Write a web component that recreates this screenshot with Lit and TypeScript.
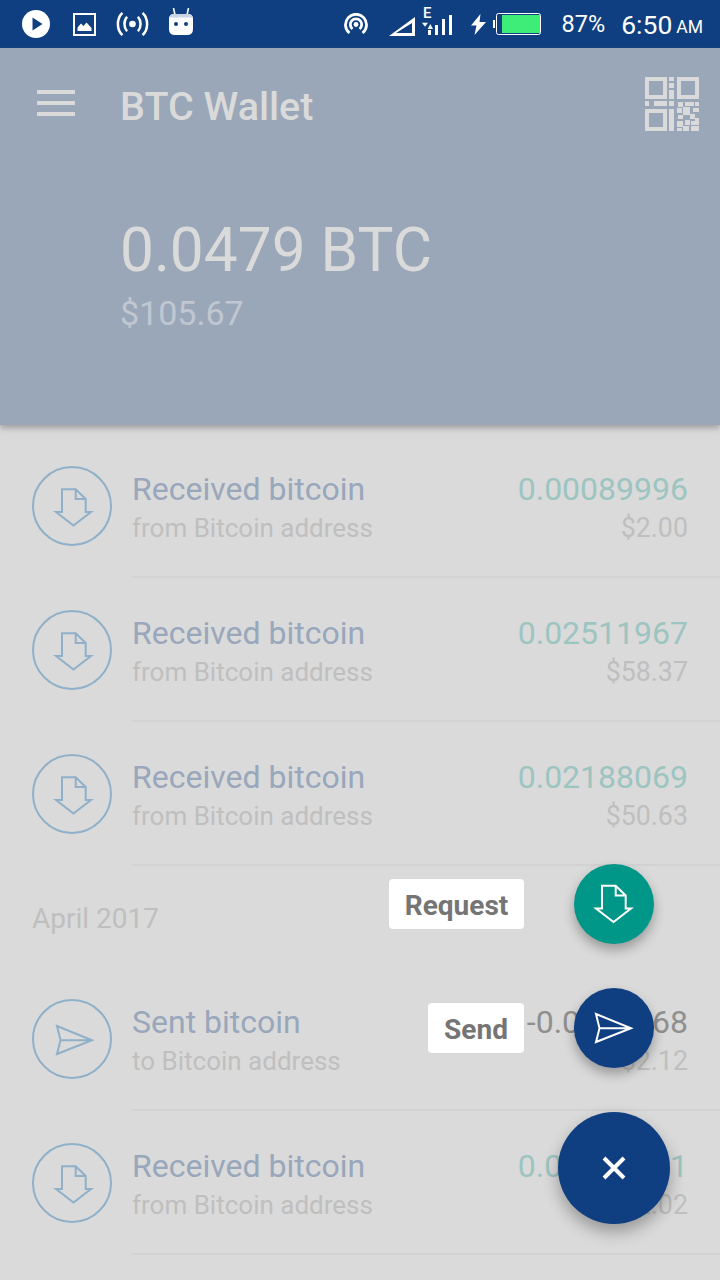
import { LitElement, css, html, svg } from 'lit';
import { customElement } from 'lit/decorators.js';

type Tx = { kind: 'in' | 'out'; title: string; sub: string; amount: string; usd: string };

const receiveGlyph = svg`<path d="M30 46V23.3H43.7L53.7 33V46H59L41.5 59.500L24 46Z M43.7 23.3V33H53.7" />`;
const sendGlyph = svg`<path d="M25 27L60 41.3L25 55L28.500 41.3Z M28.500 41.3H60" />`;

const firstRows: Tx[] = [
  { kind: 'in', title: 'Received bitcoin', sub: 'from Bitcoin address', amount: '0.00089996', usd: '$2.00' },
  { kind: 'in', title: 'Received bitcoin', sub: 'from Bitcoin address', amount: '0.02511967', usd: '$58.37' },
  { kind: 'in', title: 'Received bitcoin', sub: 'from Bitcoin address', amount: '0.02188069', usd: '$50.63' }
];

const aprilRows: Tx[] = [
  { kind: 'out', title: 'Sent bitcoin', sub: 'to Bitcoin address', amount: '-0.0009668', usd: '$2.12' },
  { kind: 'in', title: 'Received bitcoin', sub: 'from Bitcoin address', amount: '0.00087421', usd: '$2.02' }
];

// x, y, w, h of the loose modules in the lower right of the QR icon
const qrCells = [
  [24, 32, 5, 22], [33, 25, 5, 5], [40, 25, 9, 4], [50, 25, 4, 4],
  [32, 31, 5, 5], [38, 30, 7, 8], [48, 31, 6, 4], [33, 38, 5, 4],
  [45, 37, 5, 5], [50, 41, 4, 4], [32, 44, 6, 6], [40, 43, 5, 5],
  [46, 44, 8, 4], [38, 49, 6, 5], [46, 49, 8, 5], [32, 51, 5, 3]
];

@customElement('app-root')
export class AppRoot extends LitElement {
  static styles = css`
    :host {
      display: block;
      position: relative;
      width: 720px;
      height: 1280px;
      overflow: hidden;
      background: #dadada;
      font-family: Roboto, 'Liberation Sans', sans-serif;
    }

    .status-bar {
      height: 48px;
      background: #0f3f80;
      display: flex;
      align-items: center;
      justify-content: space-between;
      padding: 0 17px 0 22px;
      color: #fff;
    }

    .status-group {
      display: flex;
      align-items: center;
    }

    .status-bar svg {
      display: block;
      flex: none;
    }

    .ic-image { margin-left: 23px; }
    .ic-cast { margin-left: 20px; width: 33px; }
    .ic-droid { margin: 0 0 5px 20px; }
    .ic-tri { margin: 4px 0 0 21px; }
    .ic-net { margin: 0 0 6px 7px; }
    .ic-bolt { margin-left: 19px; }
    .ic-batt { margin-left: 7px; }

    .pct {
      margin-left: 21px;
      font-size: 23.5px;
    }

    .time {
      margin-left: 16px;
      font-size: 26.5px;
    }

    .ampm {
      margin-left: 4px;
      font-size: 17.5px;
      padding-top: 5px;
    }

    .header {
      position: relative;
      height: 377px;
      background: #9aa7b8;
      box-shadow: 0 3px 6px rgba(110, 110, 110, 0.55);
      padding: 29px 21px 0 37px;
      box-sizing: border-box;
    }

    .toolbar {
      display: flex;
      align-items: center;
      height: 54px;
    }

    .menu {
      width: 38px;
      display: flex;
      flex-direction: column;
      gap: 7px;
      margin-bottom: 2px;
    }

    .menu span {
      height: 4px;
      background: #dadada;
    }

    .brand {
      margin-left: 45px;
      padding-top: 4px;
      flex: 1;
      font-size: 39.5px;
      font-weight: 500;
      color: #dadada;
    }

    .balance {
      margin: 85px 0 0 83px;
    }

    .btc {
      font-size: 60.400px;
      line-height: 70px;
      color: #dadada;
    }

    .fiat {
      margin-top: 7px;
      font-size: 34px;
      line-height: 40px;
      color: #c0c7d1;
    }

    .list {
      padding-top: 9px;
    }

    .row {
      display: flex;
      align-items: center;
      height: 144px;
      padding-left: 32px;
      box-sizing: border-box;
    }

    .badge {
      width: 80px;
      height: 80px;
      flex: none;
      fill: none;
      stroke: #8fb0c8;
      stroke-width: 2;
    }

    .row-body {
      flex: 1;
      height: 144px;
      margin-left: 20px;
      padding-right: 32px;
      display: flex;
      align-items: center;
      justify-content: space-between;
      box-sizing: border-box;
      border-bottom: 2px solid #d2d2d2;
    }

    .text-col {
      padding-top: 6px;
    }

    .line-1 {
      font-size: 32px;
      line-height: 40px;
    }

    .line-2 {
      font-size: 26px;
      line-height: 38px;
      color: #bfbfbf;
    }

    .title {
      color: #98a7bb;
    }

    .money {
      padding-top: 6px;
      text-align: right;
    }

    .money .line-2 {
      font-size: 26.800px;
    }

    .amount-in {
      color: #9cc4c0;
    }

    .amount-out {
      color: #8f8f8f;
    }

    .section {
      height: 101px;
      padding: 36px 0 0 32px;
      box-sizing: border-box;
      font-size: 28px;
      line-height: 34px;
      color: #bfbfbf;
    }

    .actions {
      position: absolute;
      top: 0;
      left: 0;
    }

    .fab {
      position: absolute;
      border-radius: 50%;
      display: flex;
      align-items: center;
      justify-content: center;
      box-shadow: 0 6px 12px rgba(0, 0, 0, 0.3);
    }

    .fab svg {
      width: 80px;
      height: 80px;
      fill: none;
      stroke: #fff;
      stroke-width: 2;
    }

    .fab-request {
      left: 574px;
      top: 864px;
      width: 80px;
      height: 80px;
      background: #009688;
    }

    .fab-request svg {
      transform: translate(-2px, -1.5px);
    }

    .fab-send {
      left: 574px;
      top: 988px;
      width: 80px;
      height: 80px;
      background: #0f3f80;
    }

    .fab-send svg {
      transform: translate(-3px, -1px);
    }

    .fab-main {
      left: 558px;
      top: 1112px;
      width: 112px;
      height: 112px;
      background: #0f3f80;
      box-shadow: 0 8px 16px rgba(0, 0, 0, 0.3);
    }

    .fab-main svg {
      width: 24px;
      height: 24px;
      stroke-width: 4;
    }

    .tag {
      position: absolute;
      height: 50px;
      line-height: 53px;
      background: #fff;
      border-radius: 4px;
      color: #757575;
      font-size: 28px;
      font-weight: 700;
      text-align: center;
    }

    .tag-request {
      left: 389px;
      top: 879px;
      width: 135px;
    }

    .tag-send {
      left: 428px;
      top: 1003px;
      width: 96px;
    }
  `;

  private renderRow(tx: Tx) {
    return html`
      <div class="row">
        <svg class="badge" viewBox="0 0 80 80">
          <circle cx="40" cy="40" r="39"></circle>
          ${tx.kind === 'in' ? receiveGlyph : sendGlyph}
        </svg>
        <div class="row-body">
          <div class="text-col">
            <div class="line-1 title">${tx.title}</div>
            <div class="line-2">${tx.sub}</div>
          </div>
          <div class="money">
            <div class="line-1 ${tx.kind === 'in' ? 'amount-in' : 'amount-out'}">${tx.amount}</div>
            <div class="line-2">${tx.usd}</div>
          </div>
        </div>
      </div>
    `;
  }

  private renderStatusBar() {
    return html`
      <div class="status-bar">
        <div class="status-group">
          <svg width="28" height="28" viewBox="0 0 28 28">
            <circle cx="14" cy="14" r="14" fill="#fff"></circle>
            <path d="M10.500 7.500L20.500 14L10.500 20.500Z" fill="#0f3f80"></path>
          </svg>
          <svg class="ic-image" width="23" height="23" viewBox="0 0 23 23">
            <rect x="1" y="1" width="21" height="21" fill="none" stroke="#fff" stroke-width="2"></rect>
            <path d="M4.500 18V14.500L8 10.500L10.500 13L13.500 9.500L18.500 15V18Z" fill="#fff"></path>
          </svg>
          <svg class="ic-cast" width="33" height="26" viewBox="0 0 34 26" fill="none" stroke="#fff" stroke-width="2.6">
            <circle cx="17" cy="13" r="3.400" fill="#fff" stroke="none"></circle>
            <path d="M11.400 5.500C7.800 9.500 7.800 16.500 11.400 20.500M22.600 5.500C26.200 9.500 26.200 16.500 22.600 20.500"></path>
            <path d="M6.600 1.500C.4 7.500.4 18.500 6.600 24.500M27.400 1.500C33.600 7.500 33.600 18.500 27.400 24.500"></path>
          </svg>
          <svg class="ic-droid" width="24" height="27" viewBox="0 0 24 27">
            <path d="M4.500 0L6 7M19.500 0L18 7" stroke="#fff" stroke-width="1.600"></path>
            <path d="M0 11Q0 6 5 6H19Q24 6 24 11V21Q24 27 18 27H6Q0 27 0 21Z" fill="#fff"></path>
            <path d="M.5 9.500Q1 6 5 6H19Q23 6 23.500 9.500Z" fill="#c9d5e6"></path>
            <circle cx="7" cy="16" r="2" fill="#0f3f80"></circle>
            <circle cx="17" cy="16" r="2" fill="#0f3f80"></circle>
          </svg>
        </div>
        <div class="status-group">
          <svg width="24" height="22" viewBox="0 0 24 22" fill="none" stroke="#fff" stroke-width="2.800">
            <path d="M5.500 20A10.500 10.500 0 1 1 18.500 20"></path>
            <path d="M8.500 16A5.700 5.700 0 1 1 15.500 16"></path>
            <circle cx="12" cy="11.500" r="2.400" fill="#fff" stroke="none"></circle>
          </svg>
          <svg class="ic-tri" width="26" height="19" viewBox="0 0 26 19">
            <path fill-rule="evenodd" d="M26 0V19H0ZM23 6L7 16H23Z" fill="#fff"></path>
          </svg>
          <svg class="ic-net" width="30" height="36" viewBox="0 -4 30 36" fill="#fff">
            <text x="1" y="11" font-family="Roboto, sans-serif" font-size="15" font-weight="500">E</text>
            <path d="M0 15.700H6L3 19.700ZM8.300 17L11 22H5.700Z M6 23H9V28H6Z M13 18H16V28H13Z M20 12H23V28H20Z M27 8H30V28H27Z"></path>
          </svg>
          <svg class="ic-bolt" width="15" height="21" viewBox="0 0 15 21">
            <path d="M9.500 0L0 11.500H5.500L3.500 21L15 8H8.500Z" fill="#fff"></path>
          </svg>
          <svg class="ic-batt" width="48" height="22" viewBox="0 0 48 22">
            <rect x="0" y="7" width="2" height="8" fill="#fff"></rect>
            <rect x="3.500" y="0.500" width="44" height="21" rx="2" fill="none" stroke="#fff"></rect>
            <rect x="9" y="2" width="38" height="18" fill="#3ded77"></rect>
          </svg>
          <span class="pct">87%</span>
          <span class="time">6:50</span>
          <span class="ampm">AM</span>
        </div>
      </div>
    `;
  }

  override render() {
    return html`
      ${this.renderStatusBar()}
      <div class="header">
        <div class="toolbar">
          <div class="menu"><span></span><span></span><span></span></div>
          <div class="brand">BTC Wallet</div>
          <svg width="54" height="54" viewBox="0 0 54 54" fill="#dadada">
            <path
              fill-rule="evenodd"
              d="M0 0H22V22H0ZM4 4V18H18V4Z M32 0H54V22H32ZM36 4V18H50V4Z M0 32H22V54H0ZM4 36V50H18V36Z
                 M24 0H29V4H24Z M24 6H29V11H24Z M24 13H29V22H24Z M0 24H4V29H0Z M9 24H22V29H9Z M24 24H29V29H24Z"
            ></path>
            ${qrCells.map(([x, y, w, h]) => svg`<rect x=${x} y=${y} width=${w} height=${h}></rect>`)}
          </svg>
        </div>
        <div class="balance">
          <div class="btc">0.0479 BTC</div>
          <div class="fiat">$105.67</div>
        </div>
      </div>
      <div class="list">
        ${firstRows.map(tx => this.renderRow(tx))}
        <div class="section">April 2017</div>
        ${aprilRows.map(tx => this.renderRow(tx))}
      </div>
      <div class="actions">
        <div class="tag tag-request">Request</div>
        <div class="fab fab-request">
          <svg viewBox="0 0 80 80">${receiveGlyph}</svg>
        </div>
        <div class="tag tag-send">Send</div>
        <div class="fab fab-send">
          <svg viewBox="0 0 80 80">${sendGlyph}</svg>
        </div>
        <div class="fab fab-main">
          <svg viewBox="0 0 24 24"><path d="M2 2L22 22M22 2L2 22"></path></svg>
        </div>
      </div>
    `;
  }
}
